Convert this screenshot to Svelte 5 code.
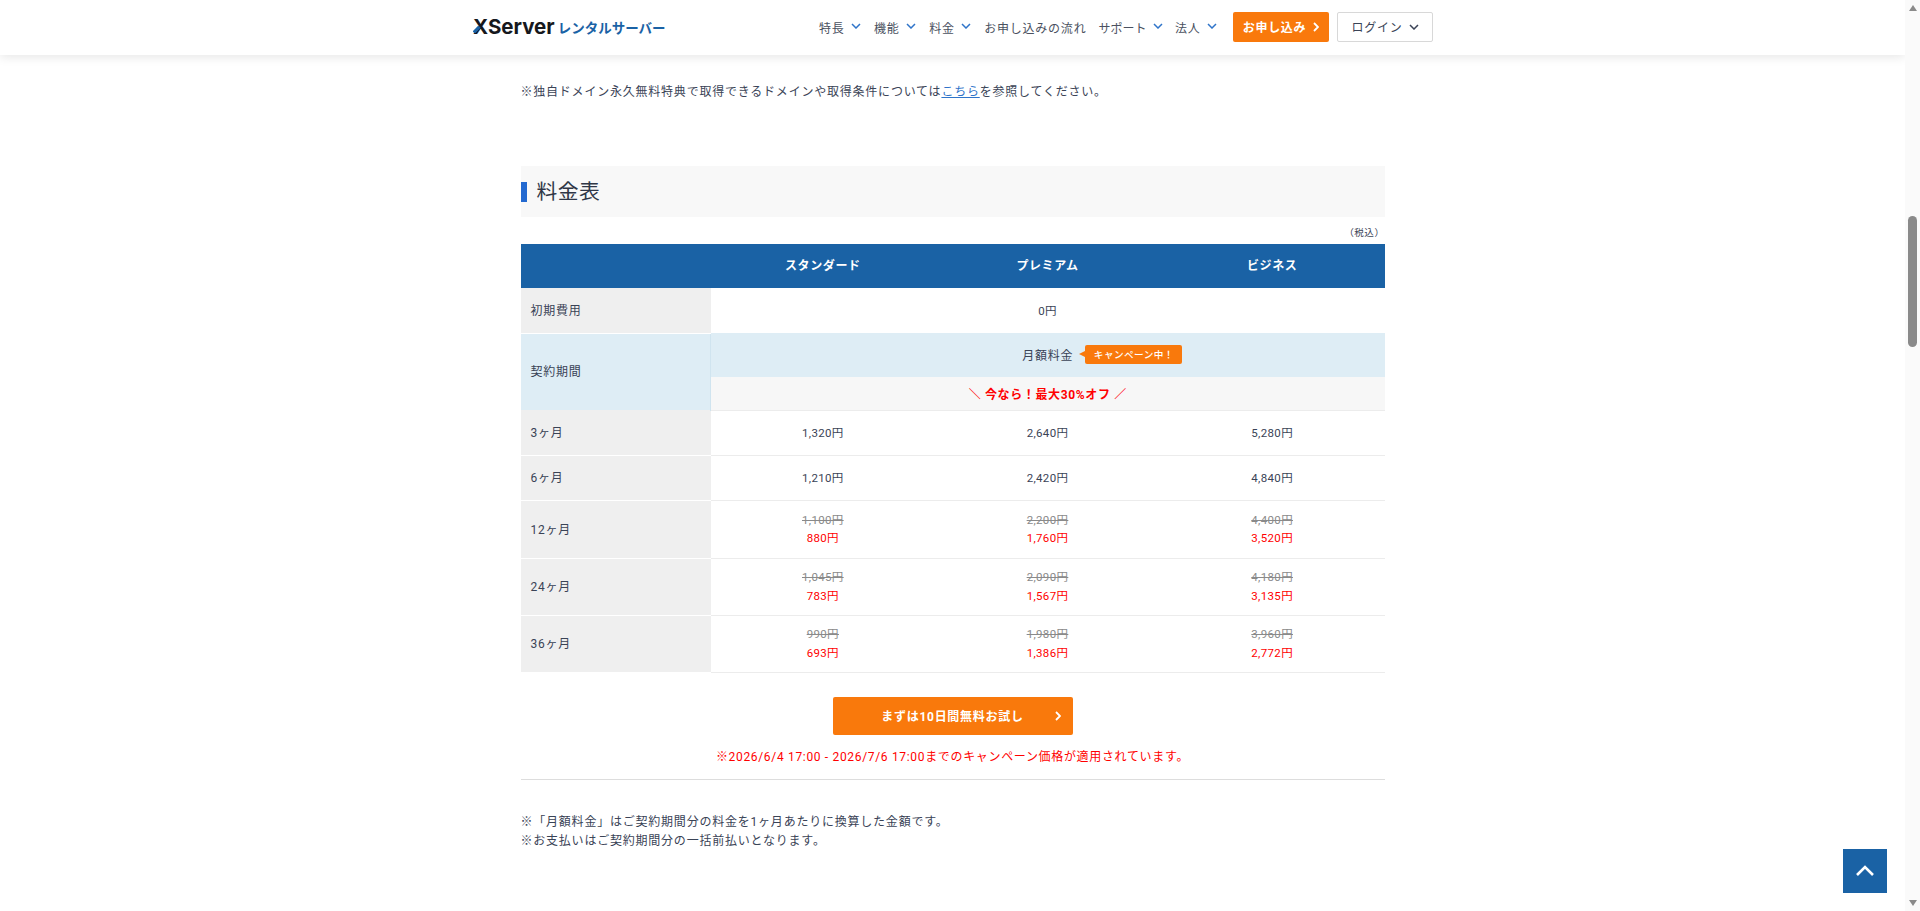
<script>
	const nav = [
		{ label: '特長', caret: true },
		{ label: '機能', caret: true },
		{ label: '料金', caret: true },
		{ label: 'お申し込みの流れ', caret: false },
		{ label: 'サポート', caret: true },
		{ label: '法人', caret: true }
	];
	const plans = ['スタンダード', 'プレミアム', 'ビジネス'];
	const plain = [
		{ term: '3ヶ月', prices: ['1,320円', '2,640円', '5,280円'] },
		{ term: '6ヶ月', prices: ['1,210円', '2,420円', '4,840円'] }
	];
	const discounted = [
		{ term: '12ヶ月', was: ['1,100円', '2,200円', '4,400円'], now: ['880円', '1,760円', '3,520円'] },
		{ term: '24ヶ月', was: ['1,045円', '2,090円', '4,180円'], now: ['783円', '1,567円', '3,135円'] },
		{ term: '36ヶ月', was: ['990円', '1,980円', '3,960円'], now: ['693円', '1,386円', '2,772円'] }
	];
</script>

<div class="page">
	<div class="main">
		<header class="header">
			<div class="logo">
				<span class="mark">XServer<svg class="leg" viewBox="0 0 9 8" width="9" height="8"><path d="M0.8 7.6L6.5 1.6" fill="none" stroke="#1a62a5" stroke-width="3.2" /></svg></span>
				<span class="sub">レンタルサーバー</span>
			</div>
			<nav class="nav">
				{#each nav as item}
					<span class="nav-item">
						{item.label}
						{#if item.caret}
							<svg class="caret" viewBox="0 0 10 6" width="10" height="6"><path d="M1 1l4 4 4-4" fill="none" stroke="#2f74c9" stroke-width="1.5" /></svg>
						{/if}
					</span>
				{/each}
			</nav>
			<span class="apply">お申し込み
				<svg viewBox="0 0 6 10" width="6" height="10"><path d="M1 1l4 4-4 4" fill="none" stroke="#fff" stroke-width="1.8" /></svg>
			</span>
			<span class="login">ログイン
				<svg viewBox="0 0 10 6" width="10" height="6"><path d="M1 1l4 4 4-4" fill="none" stroke="#3a4356" stroke-width="1.5" /></svg>
			</span>
		</header>

		<div class="content">
			<p class="lead">※独自ドメイン永久無料特典で取得できるドメインや取得条件については<a href="#top">こちら</a>を参照してください。</p>

			<h2 class="title"><span>料金表</span></h2>
			<p class="tax">（税込）</p>

			<table class="price">
				<thead>
					<tr>
						<th class="corner"></th>
						{#each plans as plan}<th>{plan}</th>{/each}
					</tr>
				</thead>
				<tbody>
					<tr class="row-init">
						<th>初期費用</th>
						<td colspan="3">0円</td>
					</tr>
					<tr class="row-month">
						<th rowspan="2" class="term-head">契約期間</th>
						<td colspan="3">
							<span class="month-label">月額料金<span class="badge">キャンペーン中！</span></span>
						</td>
					</tr>
					<tr class="row-off">
						<td colspan="3"><span class="slash">＼</span> 今なら！最大30%オフ <span class="slash">／</span></td>
					</tr>
					{#each plain as row}
						<tr class="row-plain">
							<th>{row.term}</th>
							{#each row.prices as p}<td>{p}</td>{/each}
						</tr>
					{/each}
					{#each discounted as row, r}
						<tr class="row-disc" class:tall={r === 0}>
							<th>{row.term}</th>
							{#each row.was as w, i}
								<td><s>{w}</s><b>{row.now[i]}</b></td>
							{/each}
						</tr>
					{/each}
				</tbody>
			</table>

			<div class="cta-wrap">
				<span class="cta">まずは10日間無料お試し
					<svg viewBox="0 0 6 10" width="6" height="10"><path d="M1 1l4 4-4 4" fill="none" stroke="#fff" stroke-width="1.8" /></svg>
				</span>
			</div>
			<p class="campaign">※2026/6/4 17:00 - 2026/7/6 17:00までのキャンペーン価格が適用されています。</p>
			<hr />
			<p class="note">※「月額料金」はご契約期間分の料金を1ヶ月あたりに換算した金額です。</p>
			<p class="note">※お支払いはご契約期間分の一括前払いとなります。</p>
		</div>
	</div>

	<div class="scrollbar">
		<span class="arrow up"></span>
		<span class="thumb"></span>
		<span class="arrow down"></span>
	</div>

	<span class="to-top">
		<svg viewBox="0 0 20 12" width="20" height="12"><path d="M2 10l8-8 8 8" fill="none" stroke="#fff" stroke-width="2.6" /></svg>
	</span>
</div>

<style>
	:global(body) {
		margin: 0;
		background: #fff;
	}
	.page {
		position: relative;
		display: flex;
		height: 911px;
		overflow: hidden;
		font-family: Roboto, 'Noto Sans CJK JP', sans-serif;
		font-size: 12px;
		letter-spacing: 0.065em;
		color: #3a4356;
	}
	.main {
		flex: 1;
		min-width: 0;
	}
	.header {
		display: flex;
		align-items: center;
		height: 55px;
		padding-left: 473px;
		box-shadow: 0 2px 10px rgba(0, 0, 0, 0.1);
	}
	.logo {
		display: flex;
		align-items: center;
		gap: 3px;
		width: 346px;
		margin-top: -2px;
	}
	.mark {
		position: relative;
		font-family: Inter, sans-serif;
		font-size: 20.5px;
		font-weight: 700;
		letter-spacing: 0;
		color: #16181d;
	}
	.leg {
		position: absolute;
		left: 0;
		bottom: 6px;
	}
	.sub {
		font-size: 13.5px;
		font-weight: 700;
		letter-spacing: 0;
		color: #1a62a5;
	}
	.nav {
		display: flex;
		gap: 13px;
	}
	.nav-item {
		display: flex;
		align-items: center;
		gap: 6.5px;
		color: #4a5160;
	}
	.nav-item:nth-child(5) {
		letter-spacing: 0;
		margin-left: -1px;
	}
	.nav-item:nth-child(6) {
		margin-left: -1px;
	}
	.caret {
		margin-top: -3px;
	}
	.apply {
		display: flex;
		align-items: center;
		justify-content: center;
		gap: 7px;
		box-sizing: border-box;
		width: 96px;
		height: 30px;
		margin-left: 16px;
		margin-top: -2px;
		border-radius: 2px;
		background: #f9790c;
		color: #fff;
		font-weight: 700;
		letter-spacing: 0.06em;
	}
	.login {
		display: flex;
		align-items: center;
		justify-content: center;
		gap: 6px;
		box-sizing: border-box;
		width: 96px;
		height: 30px;
		margin-left: 8px;
		margin-top: -2px;
		border: 1px solid #d8d8d8;
		border-radius: 2px;
	}
	.content {
		width: 864px;
		margin: 0 auto;
	}
	.lead {
		margin: 28px 0 0;
		line-height: 18px;
	}
	.lead a {
		color: #2f74c9;
	}
	.title {
		display: flex;
		align-items: center;
		height: 51px;
		margin: 65px 0 0;
		background: #f8f8f8;
		color: #2f3646;
		font-size: 20.8px;
		font-weight: 400;
		letter-spacing: 0.02em;
	}
	.title span {
		height: 20px;
		padding-left: 10px;
		border-left: 6px solid #2369d0;
		line-height: 20px;
	}
	.tax {
		margin: 9px 0 0;
		height: 18px;
		line-height: 14px;
		text-align: right;
		font-size: 9.6px;
		letter-spacing: 0.05em;
	}
	.price {
		width: 100%;
		border-collapse: collapse;
		table-layout: fixed;
		text-align: center;
	}
	.price thead th {
		height: 44px;
		padding: 0 0 3px;
		box-sizing: border-box;
		background: #1a62a5;
		color: #fff;
		font-weight: 700;
		letter-spacing: 0.05em;
	}
	.price thead .corner {
		width: 190px;
	}
	.price tbody th {
		padding: 0 0 2px 10px;
		box-sizing: border-box;
		background: #efefef;
		border-bottom: 1px solid #fff;
		text-align: left;
		font-weight: 400;
	}
	.price tbody td {
		padding: 0 0 2px;
		box-sizing: border-box;
		border-bottom: 1px solid #ececec;
		font-size: 11.5px;
		letter-spacing: 0.03em;
	}
	.row-init td,
	.row-init th {
		height: 45px;
	}
	.row-init td {
		border-bottom: 0 !important;
	}
	.price tbody .term-head {
		background: #deedf5;
		border-right: 1px solid #d0e4ef;
		border-bottom: 0;
	}
	.row-month td {
		height: 44px;
		background: #deedf5;
		border-bottom: 0 !important;
		font-size: 12px !important;
		letter-spacing: 0.065em !important;
	}
	.month-label {
		position: relative;
		display: inline-block;
	}
	.badge {
		position: absolute;
		left: calc(100% + 12px);
		top: -1px;
		padding: 0 8.5px;
		height: 19px;
		line-height: 19px;
		white-space: nowrap;
		border-radius: 2px;
		background: #f9790c;
		color: #fff;
		font-size: 9.6px;
		font-weight: 500;
		letter-spacing: 0.05em;
	}
	.badge::before {
		content: '';
		position: absolute;
		left: -6px;
		top: 6px;
		border-style: solid;
		border-width: 3.5px 6px 3.5px 0;
		border-color: transparent #f9790c transparent transparent;
	}
	.row-off td {
		height: 33px;
		padding-bottom: 0 !important;
		background: #f7f7f7;
		color: #f00;
		font-weight: 700;
		font-size: 12px !important;
		letter-spacing: 0.053em !important;
	}
	.slash {
		font-weight: 400;
	}
	.row-plain td,
	.row-plain th {
		height: 45px;
	}
	.row-disc td,
	.row-disc th {
		height: 57px;
	}
	.row-disc td {
		padding-bottom: 0 !important;
	}
	.row-disc.tall td,
	.row-disc.tall th {
		height: 58px;
	}
	.row-disc s {
		display: block;
		color: #8a8a8a;
		line-height: 18.5px;
	}
	.row-disc b {
		display: block;
		color: #f00;
		font-weight: 400;
		line-height: 18.5px;
	}
	.cta-wrap {
		display: flex;
		justify-content: center;
		margin-top: 24px;
	}
	.cta {
		position: relative;
		display: flex;
		align-items: center;
		justify-content: center;
		box-sizing: border-box;
		width: 240px;
		height: 38px;
		border-radius: 2px;
		background: #f9790c;
		color: #fff;
		font-weight: 700;
		letter-spacing: 0.06em;
	}
	.cta svg {
		position: absolute;
		right: 12px;
		top: 14px;
	}
	.campaign {
		margin: 13px 0 0;
		line-height: 18px;
		text-align: center;
		color: #f00;
		letter-spacing: 0.056em;
	}
	hr {
		margin: 13px 0 0;
		border: 0;
		border-top: 1px solid #ddd;
	}
	.note {
		margin: 0;
		line-height: 19px;
	}
	hr + .note {
		margin-top: 33px;
	}
	.scrollbar {
		position: relative;
		flex: 0 0 15px;
		background: #fafafa;
		display: flex;
		flex-direction: column;
		align-items: center;
	}
	.arrow {
		width: 0;
		height: 0;
		border-style: solid;
		border-color: transparent;
	}
	.arrow.up {
		margin-top: 5px;
		border-width: 0 4.5px 6px;
		border-bottom-color: #8a8a8a;
	}
	.thumb {
		width: 9px;
		height: 131px;
		margin-top: 205px;
		border-radius: 5px;
		background: #8a8a8a;
	}
	.arrow.down {
		margin-top: auto;
		margin-bottom: 5px;
		border-width: 6px 4.5px 0;
		border-top-color: #8a8a8a;
	}
	.to-top {
		position: absolute;
		left: 1843px;
		top: 849px;
		display: flex;
		align-items: center;
		justify-content: center;
		width: 44px;
		height: 44px;
		background: #1a62a5;
	}
</style>
